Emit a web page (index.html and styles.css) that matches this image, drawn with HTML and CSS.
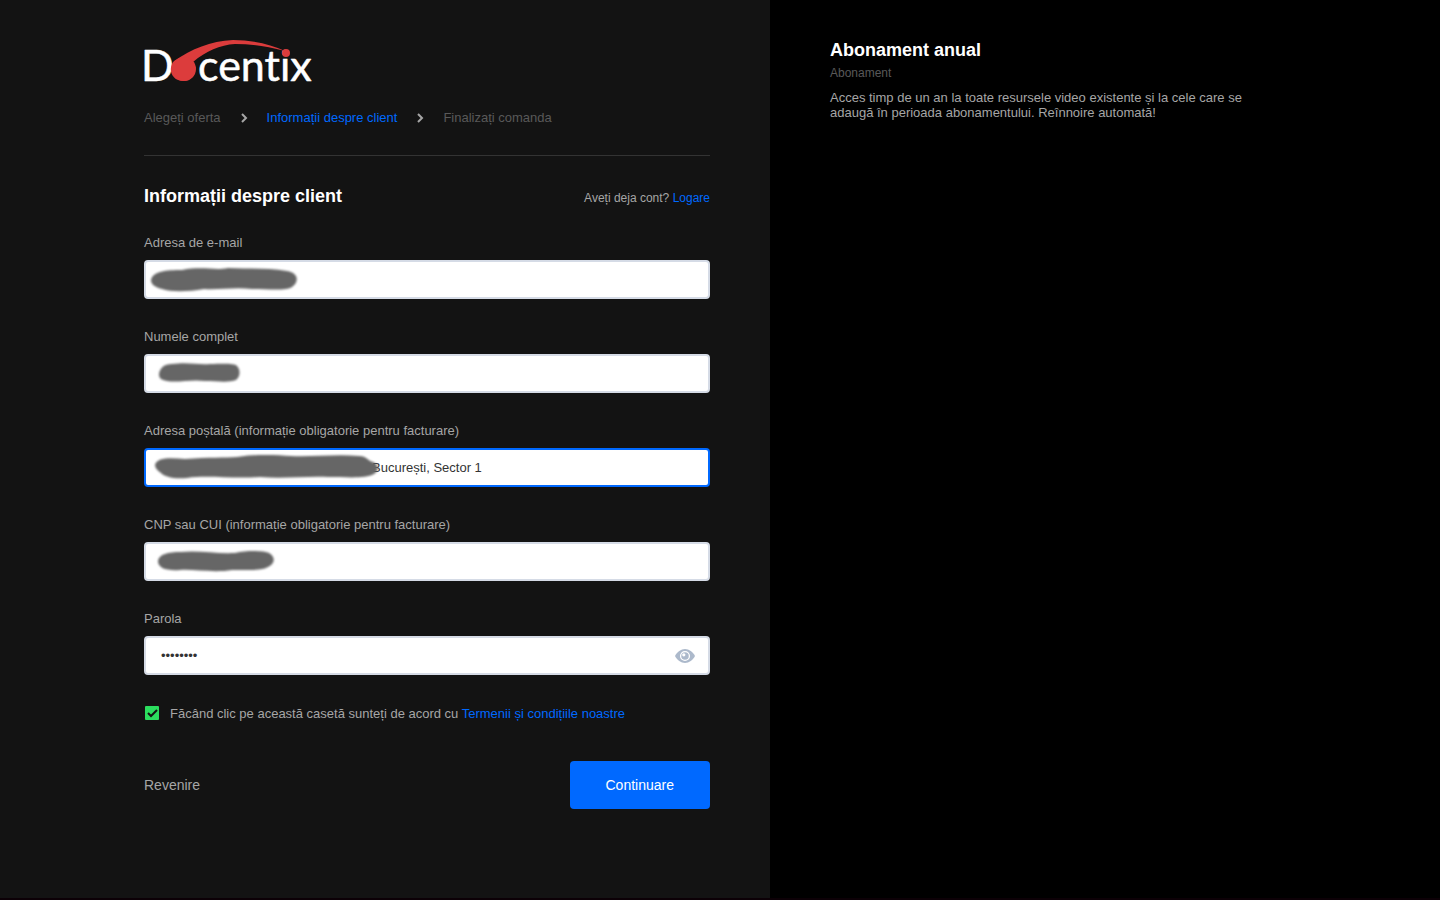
FILE: index.html
```html
<!DOCTYPE html>
<html lang="ro">

<head>
    <meta charset="utf-8">
    <meta name="viewport" content="width=device-width, initial-scale=1">
    <title>Docentix - Informații despre client</title>
    <link rel="stylesheet" href="styles.css">
</head>

<body>
<div class="page">
    <main class="checkout">
        <svg class="logo" width="170" height="43" viewBox="0 0 170 43" role="img" aria-label="Docentix">
            <text class="logo-text" x="-3" y="41">D</text>
            <text class="logo-text" x="54" y="41">centix</text>
            <path fill="#dc3c3c" d="M30 21C48 9 66 1 89 0C108 0 126 4 141 11C122 6 107 4 91 4C76 5 62 11 49 22C53 30 49 41 40 41C26 41 24 27 30 21Z"/>
            <circle fill="#dc3c3c" cx="40" cy="29" r="12"/>
            <circle fill="#dc3c3c" cx="142" cy="13" r="4"/>
        </svg>

        <nav class="steps">
            <a class="step" href="#">Alegeți oferta</a>
            <svg class="chevron" width="6" height="10" viewBox="0 0 6 10"><path d="M1 1l4 4-4 4"/></svg>
            <a class="step active" href="#">Informații despre client</a>
            <svg class="chevron" width="6" height="10" viewBox="0 0 6 10"><path d="M1 1l4 4-4 4"/></svg>
            <a class="step" href="#">Finalizați comanda</a>
        </nav>

        <form>
            <div class="form-head">
                <h1>Informații despre client</h1>
                <p class="login">Aveți deja cont? <a href="#">Logare</a></p>
            </div>

            <div class="field">
                <label for="email">Adresa de e-mail</label>
                <div class="control">
                    <input id="email" type="email">
                    <svg class="smudge" width="240" height="39" viewBox="0 0 240 39"><path d="M7 20C9 11 22 10 38 10C60 6 70 11 84 8C106 9 125 8 143 11C155 13 155 22 148 27C142 31 125 29 108 29C90 27 76 30 60 29C43 32 27 32 18 29C10 27 7 24 7 20Z"/></svg>
                </div>
            </div>

            <div class="field">
                <label for="name">Numele complet</label>
                <div class="control">
                    <input id="name" type="text">
                    <svg class="smudge" width="240" height="39" viewBox="0 0 240 39"><path d="M15 20C16 14 20 10 28 10C45 8 54 11 66 10C78 10 90 9 93 12C97 16 96 23 92 26C84 29 73 27 61 27C47 25 34 29 23 27C17 26 15 24 15 20Z"/></svg>
                </div>
            </div>

            <div class="field">
                <label for="address">Adresa poștală (informație obligatorie pentru facturare)</label>
                <div class="control">
                    <input id="address" class="focused" type="text" value="București, Sector 1">
                    <svg class="smudge" width="240" height="39" viewBox="0 0 240 39"><path d="M11 17C13 9 27 10 41 11C65 9 81 10 93 9C113 6 133 7 147 8C168 9 192 6 215 8C223 8 224 13 229 14C235 17 235 23 230 26C221 31 203 29 184 29C162 28 139 31 116 29C88 31 64 27 43 30C29 31 21 29 17 25C13 22 11 20 11 17Z"/></svg>
                </div>
            </div>

            <div class="field">
                <label for="cnp">CNP sau CUI (informație obligatorie pentru facturare)</label>
                <div class="control">
                    <input id="cnp" type="text">
                    <svg class="smudge" width="240" height="39" viewBox="0 0 240 39"><path d="M14 19C15 12 24 10 37 10C54 8 72 12 91 11C105 8 120 9 125 11C132 15 131 22 124 25C117 29 105 28 88 28C70 31 49 27 36 28C22 29 14 26 14 19Z"/></svg>
                </div>
            </div>

            <div class="field">
                <label for="password">Parola</label>
                <div class="control">
                    <input id="password" type="password" value="docentix">
                    <button class="reveal" type="button" aria-label="Arată parola">
                        <svg width="20" height="14" viewBox="0 0 20 14">
                            <path fill="#acb9cb" d="M0 7C2 3 6 0 10 0s8 3 10 7c-2 4-6 7-10 7S2 11 0 7z"/>
                            <circle cx="10" cy="7" r="4.4" fill="none" stroke="#fff" stroke-width="1.3"/>
                            <circle cx="8.8" cy="5.8" r="1.6" fill="#fff"/>
                        </svg>
                    </button>
                </div>
            </div>

            <div class="terms">
                <input id="terms" type="checkbox" checked>
                <label for="terms">Făcând clic pe această casetă sunteți de acord cu <a href="#">Termenii și condițiile noastre</a></label>
            </div>

            <div class="actions">
                <a class="back" href="#">Revenire</a>
                <button class="submit" type="submit">Continuare</button>
            </div>
        </form>
    </main>

    <aside class="summary">
        <h2>Abonament anual</h2>
        <p class="kind">Abonament</p>
        <p class="description">Acces timp de un an la toate resursele video existente și la cele care se adaugă în perioada abonamentului. Reînnoire automată!</p>
    </aside>
</div>
</body>

</html>
```
FILE: styles.css
```css
* {
    box-sizing: border-box;
}

body {
    margin: 0;
    background: #000;
    color: #a6a6a6;
    font: 13px/15px "Liberation Sans", Arial, sans-serif;
}

h1, h2, p {
    margin: 0;
}

h1, h2 {
    color: #fff;
    font-size: 18px;
    line-height: 21px;
}

a {
    color: #0069ff;
    text-decoration: none;
}

.page {
    display: grid;
    grid-template-columns: 77fr 67fr;
    min-height: 100vh;
    border-bottom: 2px solid #0c0006;
}

.checkout {
    padding: 40px 60px 40px 10vw;
    background: #131313;
}

.logo {
    display: block;
    overflow: visible;
}

.logo-text {
    fill: #fff;
    stroke: #fff;
    stroke-width: 0.5;
    stroke-linejoin: round;
    font: 43px Lato, sans-serif;
    font-variant-ligatures: none;
}

.steps {
    display: flex;
    align-items: center;
    gap: 20px;
    padding: 27px 0 30px;
    border-bottom: 1px solid #333;
}

.step {
    color: #595959;
}

.step.active {
    color: #0069ff;
}

.chevron {
    overflow: visible;
    fill: none;
    stroke: #a6a6a6;
    stroke-width: 2;
}

.form-head {
    display: flex;
    justify-content: space-between;
    align-items: center;
    padding: 30px 0 28px;
}

.login {
    padding-top: 4px;
    font-size: 12px;
}

.field {
    margin-bottom: 30px;
}

.field label {
    display: block;
    margin-bottom: 10px;
}

.control {
    position: relative;
}

.control input {
    display: block;
    width: 100%;
    height: 39px;
    padding: 0 15px;
    border: 2px solid #d5dbe6;
    border-radius: 4px;
    background: #fff;
    color: #333;
    font: inherit;
    outline: none;
}

.control .focused {
    padding-left: 226px;
    border-color: #0069ff;
}

.smudge {
    position: absolute;
    top: 0;
    left: 0;
    fill: #666;
    filter: blur(1px);
    pointer-events: none;
}

.reveal {
    position: absolute;
    top: 13px;
    right: 15px;
    display: flex;
    padding: 0;
    border: 0;
    background: none;
}

.terms {
    display: flex;
    align-items: center;
    gap: 10px;
}

.terms input {
    appearance: none;
    width: 14px;
    height: 14px;
    margin: 1px;
    border-radius: 1px;
    background: #2bde5e url("data:image/svg+xml,%3Csvg xmlns='http://www.w3.org/2000/svg' viewBox='0 0 14 14'%3E%3Cpath d='M3 7l3 3 6-6' fill='none' stroke='%23131313' stroke-width='2'/%3E%3C/svg%3E");
}

.actions {
    display: flex;
    justify-content: space-between;
    align-items: center;
    margin-top: 40px;
    font-size: 14px;
}

.back {
    color: #a6a6a6;
}

.submit {
    height: 48px;
    padding: 0 36px;
    border: 0;
    border-radius: 4px;
    background: #0069ff;
    color: #fff;
    font: inherit;
}

.summary {
    padding: 40px 60px;
}

.kind {
    margin: 5px 0 9px;
    color: #595959;
    font-size: 12px;
}

.description {
    max-width: 440px;
}
```
